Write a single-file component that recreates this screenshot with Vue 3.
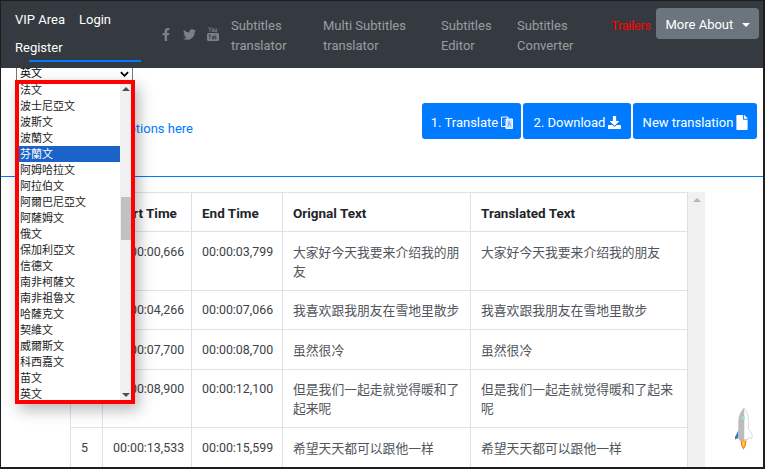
<template>
  <div class="page">
    <!-- top nav -->
    <nav class="navbar">
      <div class="account">
        <div class="account-row">
          <a class="acc-link">VIP Area</a>
          <a class="acc-link">Login</a>
        </div>
        <a class="acc-link register">Register</a>
      </div>

      <div class="social">
        <svg class="ic-fb" viewBox="0 0 320 512"><path d="M279.14 288l14.22-92.66h-88.91v-60.13c0-25.35 12.42-50.06 52.24-50.06h40.42V6.26S260.43 0 225.36 0c-73.22 0-121.08 44.38-121.08 124.72v70.62H22.89V288h81.39v224h100.17V288z"/></svg>
        <svg class="ic-tw" viewBox="0 0 512 512"><path d="M459.37 151.716c.325 4.548.325 9.097.325 13.645 0 138.72-105.583 298.558-298.558 298.558-59.452 0-114.68-17.219-161.137-47.106 8.447.974 16.568 1.299 25.34 1.299 49.055 0 94.213-16.568 130.274-44.832-46.132-.975-84.792-31.188-98.112-72.772 6.498.974 12.995 1.624 19.818 1.624 9.421 0 18.843-1.3 27.614-3.573-48.081-9.747-84.143-51.98-84.143-102.985v-1.299c13.969 7.797 30.214 12.67 47.431 13.319-28.264-18.843-46.781-51.005-46.781-87.391 0-19.492 5.197-37.36 14.294-52.954 51.655 63.675 129.3 105.258 216.365 109.807-1.624-7.797-2.599-15.918-2.599-24.04 0-57.828 46.782-104.934 104.934-104.934 30.213 0 57.502 12.67 76.67 33.137 23.715-4.548 46.456-13.32 66.599-25.34-7.798 24.366-24.366 44.833-46.132 57.827 21.117-2.273 41.584-8.122 60.426-16.243-14.292 20.791-32.161 39.308-52.628 54.253z"/></svg>
        <svg class="ic-yt" viewBox="0 0 12 14"><path d="M2 0l1 2.4L4 0h.8L3.4 3.2V5h-.8V3.2L1.2 0zM5.2 1.4h1.6v3.6H5.2zM7.6 1.4h.8V4h.6V1.4h.8V5H7.6z"/><path fill-rule="evenodd" d="M1.5 6h9A1.5 1.5 0 0 1 12 7.5v5A1.5 1.5 0 0 1 10.500 14h-9A1.500 1.500 0 0 1 0 12.500v-5A1.500 1.500 0 0 1 1.500 6zM1.500 7.800v.7h1v3.800h.8V8.500h1v-.7zM5 9v3.300h1.800V9H6v2.600h-.2V9zM7.500 7.800v4.500h1.800V9H8.200V7.800zM8.200 9.700h.4v1.900h-.4z"/></svg>
      </div>

      <div class="nav-links">
        <a v-for="link in navLinks" :key="link.first + link.second" class="nav-link" :style="{ width: link.width + 'px' }">
          {{ link.first }}<br />{{ link.second }}
        </a>
      </div>

      <a class="trailers">Trailers</a>
      <button class="more-btn">More About <span class="caret"></span></button>
    </nav>

    <!-- language select, clipped by the popup below it -->
    <div class="select-box">
      <span>英文</span>
      <svg class="chevron" viewBox="0 0 10 6"><path d="M1 1l4 4 4-4" fill="none" stroke="#000" stroke-width="2"/></svg>
    </div>

    <div class="toolbar">
      <a class="options-link">Set options here</a>
      <div class="actions">
        <button class="btn btn-1">1. Translate
          <svg class="ic-lang" viewBox="0 0 12 13">
            <path d="M.5 1h6.500v9.500H.5z" fill="none" stroke="#fff" stroke-width="1"/>
            <path d="M5 3h6.500v9.500H5z" fill="#cfe4ff" stroke="#fff" stroke-width="1"/>
            <path d="M2 4h3M3.500 3v1M2.500 7l2-3M6.800 10.500l1.400-5 1.400 5" fill="none" stroke="#4a9bff" stroke-width=".9"/>
          </svg>
        </button>
        <button class="btn btn-2">2. Download
          <svg class="ic-dl" viewBox="0 0 512 512"><path d="M216 0h80c13.3 0 24 10.700 24 24v168h87.700c17.800 0 26.700 21.500 14.100 34.100L269.700 378.300c-7.500 7.500-19.800 7.500-27.300 0L90.100 226.100c-12.600-12.600-3.700-34.100 14.100-34.100H192V24c0-13.300 10.700-24 24-24zm296 376v112c0 13.300-10.700 24-24 24H24c-13.300 0-24-10.700-24-24V376c0-13.300 10.700-24 24-24h146.700l49 49c20.100 20.100 52.500 20.100 72.600 0l49-49H488c13.300 0 24 10.700 24 24z"/></svg>
        </button>
        <button class="btn btn-3">New translation
          <svg class="ic-file" viewBox="0 0 384 512"><path d="M224 136V0H24C10.700 0 0 10.700 0 24v464c0 13.300 10.700 24 24 24h336c13.300 0 24-10.700 24-24V160H248c-13.200 0-24-10.800-24-24zm160-14.100v6.100H256V0h6.100c6.400 0 12.500 2.500 17 7l97.900 98c4.500 4.500 7 10.600 7 16.900z"/></svg>
        </button>
      </div>
    </div>

    <div class="blue-line"></div>

    <!-- subtitles table + its scrollbar -->
    <div class="table-wrap">
      <table class="sub-table">
        <colgroup>
          <col style="width: 32px" />
          <col style="width: 89px" />
          <col style="width: 91px" />
          <col style="width: 188px" />
          <col style="width: 217px" />
        </colgroup>
        <thead>
          <tr>
            <th>#</th>
            <th>Start Time</th>
            <th>End Time</th>
            <th>Orignal Text</th>
            <th>Translated Text</th>
          </tr>
        </thead>
        <tbody>
          <tr v-for="row in rows" :key="row.id">
            <td class="time">{{ row.id }}</td>
            <td class="time">{{ row.start }}</td>
            <td class="time">{{ row.end }}</td>
            <td class="cjk">{{ row.text }}</td>
            <td class="cjk">{{ row.text }}</td>
          </tr>
        </tbody>
      </table>
      <div class="table-scroll"><span class="arrow-up grey"></span></div>
    </div>

    <!-- open dropdown of the select -->
    <div class="popup">
      <div class="popup-list">
        <div v-for="lang in languages" :key="lang" class="popup-item" :class="{ selected: lang === '芬蘭文' }">{{ lang }}</div>
      </div>
      <div class="popup-scroll">
        <span class="arrow-up"></span>
        <span class="thumb"></span>
        <span class="arrow-down"></span>
      </div>
    </div>

    <!-- back-to-top rocket -->
    <svg class="rocket" viewBox="0 0 18 42">
      <path d="M3.500 22L0 29v2.500l3.500-1.500z" fill="#2f7fb8"/>
      <path d="M9 0c2.500 2.500 4 6 4.300 11l.2 10 3.500 5v4.500l-3.700-1-.3 2H9z" fill="#fff" stroke="#d0d0d0" stroke-width=".8"/>
      <path d="M9 0C5.500 3 3.500 8 3.300 13v17l1 2.500H9z" fill="#bcbcbc"/>
      <circle cx="8" cy="10" r="2" fill="#a5dccd"/>
      <path d="M5.500 32.500h6l-.7 5-2.300 4.300-2.300-4.300z" fill="#f5811f"/>
      <path d="M7 33.500h3l-.4 3.500-1.100 2.300-1.100-2.300z" fill="#ffd83a"/>
    </svg>
  </div>
</template>

<script setup>
const navLinks = [
  { first: "Subtitles", second: "translator", width: 92 },
  { first: "Multi Subtitles", second: "translator", width: 118 },
  { first: "Subtitles", second: "Editor", width: 76 },
  { first: "Subtitles", second: "Converter", width: 94 },
];

const languages = [
  "法文", "波士尼亞文", "波斯文", "波蘭文", "芬蘭文", "阿姆哈拉文", "阿拉伯文",
  "阿爾巴尼亞文", "阿薩姆文", "俄文", "保加利亞文", "信德文", "南非柯薩文",
  "南非祖魯文", "哈薩克文", "契維文", "威爾斯文", "科西嘉文", "苗文", "英文",
];

const rows = [
  { id: 1, start: "00:00:00,666", end: "00:00:03,799", text: "大家好今天我要来介绍我的朋友" },
  { id: 2, start: "00:00:04,266", end: "00:00:07,066", text: "我喜欢跟我朋友在雪地里散步" },
  { id: 3, start: "00:00:07,700", end: "00:00:08,700", text: "虽然很冷" },
  { id: 4, start: "00:00:08,900", end: "00:00:12,100", text: "但是我们一起走就觉得暖和了起来呢" },
  { id: 5, start: "00:00:13,533", end: "00:00:15,599", text: "希望天天都可以跟他一样" },
];
</script>

<style>
html,
body {
  margin: 0;
  background: #fff;
}
</style>

<style scoped>
.page {
  position: relative;
  box-sizing: border-box;
  width: 765px;
  height: 469px;
  overflow: hidden;
  background: #fff;
  border: 1px solid #1e1e1e;
  border-right-width: 2px;
  border-bottom-width: 2px;
  color: #212529;
  font-family: "Roboto", "Noto Sans CJK TC", sans-serif;
}

/* nav */
.navbar {
  display: flex;
  align-items: flex-start;
  height: 67px;
  box-sizing: border-box;
  background: #343a40;
  font-size: 13px;
  line-height: 20px;
}

.account {
  width: 146px;
  padding: 9px 0 0 14px;
  box-sizing: border-box;
}

.account-row {
  display: flex;
  gap: 14px;
  margin-bottom: 8px;
}

.acc-link {
  color: #fff;
}

.register {
  display: block;
  position: relative;
  height: 30px;
}

/* underline of the active item sits a bit to the right of the text */
.register::after {
  content: "";
  position: absolute;
  left: 14px;
  width: 112px;
  top: 22px;
  height: 2px;
  background: #007bff;
}

.social {
  display: flex;
  align-items: center;
  width: 69px;
  height: 16px;
  margin: 25px 0 0 15px;
  fill: #7b8087;
}

.ic-fb {
  width: 8px;
  height: 13px;
  margin-right: 13px;
}

.ic-tw {
  width: 13px;
  height: 13px;
  margin-right: 11px;
}

.ic-yt {
  width: 12px;
  height: 14px;
}

.nav-links {
  display: flex;
  margin: 15px 0 0 0;
  color: rgba(255, 255, 255, 0.5);
}

.nav-link {
  display: block;
  white-space: nowrap;
}

.trailers {
  width: 45px;
  margin: 15px 0 0 0;
  letter-spacing: -0.4px;
  color: #ff0000;
}

.more-btn {
  width: 103px;
  height: 31px;
  margin-top: 7px;
  padding: 2px 0 0;
  border: none;
  border-radius: 4px;
  background: #6c757d;
  color: #fff;
  font-family: inherit;
  font-size: 13px;
}

.caret {
  display: inline-block;
  margin-left: 5px;
  vertical-align: 2px;
  border-top: 4px solid #fff;
  border-left: 4px solid transparent;
  border-right: 4px solid transparent;
}

/* select */
.select-box {
  display: flex;
  align-items: flex-end;
  justify-content: space-between;
  box-sizing: border-box;
  width: 117px;
  height: 13px;
  margin-left: 15px;
  padding: 0 3px;
  border: 1px solid #767676;
  border-top: none;
  overflow: hidden;
  font-family: "Noto Sans CJK TC", sans-serif;
  font-size: 11px;
  line-height: 15px;
  color: #000;
}

.chevron {
  width: 9px;
  height: 6px;
  margin-bottom: 3px;
}

/* toolbar */
.toolbar {
  display: flex;
  justify-content: space-between;
  align-items: flex-start;
  height: 95px;
  padding: 22px 6px 0 0;
  box-sizing: border-box;
}

.options-link {
  margin: 17px 0 0 98px;
  color: #007bff;
  font-size: 13px;
  line-height: 18px;
}

.actions {
  display: flex;
  gap: 2px;
}

.btn {
  display: flex;
  align-items: center;
  justify-content: center;
  gap: 3px;
  height: 36px;
  padding: 2px 0 0 1px;
  border: none;
  border-radius: 3px;
  background: #007bff;
  color: #fff;
  font-family: inherit;
  font-size: 13px;
  fill: #fff;
}

.btn-1 {
  width: 99px;
}

.btn-2 {
  width: 108px;
}

.btn-3 {
  width: 124px;
}

.ic-lang {
  width: 12px;
  height: 13px;
}

.ic-dl {
  width: 13px;
  height: 13px;
}

.ic-file {
  width: 12px;
  height: 15px;
}

.blue-line {
  height: 1px;
  background: #007bff;
}

/* table */
.table-wrap {
  display: flex;
  align-items: flex-start;
  margin: 15px 0 0 69px;
}

.sub-table {
  width: 618px;
  flex: none;
  table-layout: fixed;
  border-collapse: collapse;
  font-size: 12.400px;
  line-height: 19px;
}

.sub-table th,
.sub-table td {
  border: 1px solid #dee2e6;
  padding: 9.750px 10px;
  text-align: left;
  vertical-align: top;
}

.sub-table th {
  padding: 11px 10px 8px;
  font-weight: 700;
  font-size: 13.500px;
}

.sub-table td {
  color: #3c4248;
}

.sub-table td.cjk {
  font-family: "Noto Sans CJK SC", sans-serif;
  font-size: 12.800px;
  color: #50565c;
}

.table-scroll {
  width: 17px;
  height: 300px;
  background: #f1f1f1;
  position: relative;
}

.arrow-up {
  position: absolute;
  top: 3px;
  left: 50%;
  margin-left: -4px;
  border-bottom: 4px solid #505050;
  border-left: 4px solid transparent;
  border-right: 4px solid transparent;
}

.arrow-up.grey {
  top: 6px;
  border-bottom-color: #b5b5b5;
}

/* open select popup */
.popup {
  position: absolute;
  left: 14px;
  top: 79px;
  width: 120px;
  height: 324px;
  box-sizing: border-box;
  display: flex;
  border: 4px solid #ff0000;
  background: #fff;
  box-shadow: 4px 6px 14px rgba(0, 0, 0, 0.28);
  overflow: hidden;
  font-family: "Noto Sans CJK TC", sans-serif;
}

.popup-list {
  flex: 1;
  margin-top: -2px;
  font-size: 11px;
  color: #222;
}

.popup-item {
  height: 16px;
  line-height: 15px;
  padding-left: 1px;
  overflow: hidden;
  white-space: nowrap;
}

.popup-item.selected {
  background: #1c63c9;
  color: #fff;
}

.popup-scroll {
  position: relative;
  width: 11px;
  background: #f0f0f0;
}

.thumb {
  position: absolute;
  top: 113px;
  left: 1px;
  right: 0;
  height: 43px;
  background: #c1c1c1;
}

.arrow-down {
  position: absolute;
  bottom: 3px;
  left: 50%;
  margin-left: -4px;
  border-top: 4px solid #505050;
  border-left: 4px solid transparent;
  border-right: 4px solid transparent;
}

.rocket {
  position: absolute;
  left: 734px;
  top: 407px;
  width: 18px;
  height: 42px;
}
</style>
